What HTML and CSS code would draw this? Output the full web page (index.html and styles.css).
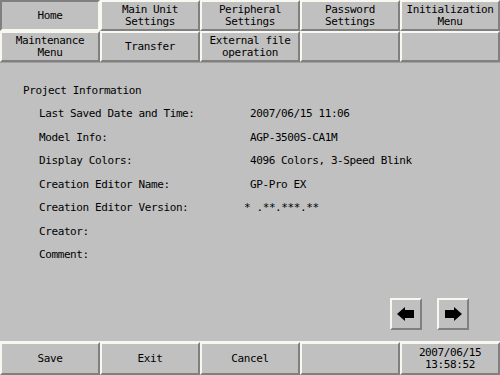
FILE: index.html
```html
<!DOCTYPE html>
<html lang="en">
<head>
    <meta charset="UTF-8">
    <title>Project Information</title>
    <link rel="stylesheet" href="styles.css">
</head>
<body>

    <div class="tabs">
        <div class="tab selected">Home</div>
        <div class="tab">Main Unit<br>Settings</div>
        <div class="tab">Peripheral<br>Settings</div>
        <div class="tab">Password<br>Settings</div>
        <div class="tab">Initialization<br>Menu</div>
        <div class="tab">Maintenance<br>Menu</div>
        <div class="tab">Transfer</div>
        <div class="tab">External file<br>operation</div>
        <div class="tab"></div>
        <div class="tab"></div>
    </div>

    <div class="content">
        <div class="title">Project Information</div>
        <div class="info">
            <div class="row"><span class="label">Last Saved Date and Time:</span><span class="value">2007/06/15 11:06</span></div>
            <div class="row"><span class="label">Model Info:</span><span class="value">AGP-3500S-CA1M</span></div>
            <div class="row"><span class="label">Display Colors:</span><span class="value">4096 Colors, 3-Speed Blink</span></div>
            <div class="row"><span class="label">Creation Editor Name:</span><span class="value">GP-Pro EX</span></div>
            <div class="row"><span class="label">Creation Editor Version:</span><span class="value version">* .**.***.**</span></div>
            <div class="row"><span class="label">Creator:</span><span class="value"></span></div>
            <div class="row"><span class="label">Comment:</span><span class="value"></span></div>
        </div>
        <div class="arrows">
            <button class="arrow">
                <svg width="18" height="14" viewBox="0 0 18 14"><path d="M0 7 L8 0 L8 3 L17 3 L17 11 L8 11 L8 14 Z" fill="#000"/></svg>
            </button>
            <button class="arrow">
                <svg width="18" height="14" viewBox="0 0 18 14"><path d="M18 7 L10 0 L10 3 L1 3 L1 11 L10 11 L10 14 Z" fill="#000"/></svg>
            </button>
        </div>
    </div>

    <div class="footer">
        <div class="tab">Save</div>
        <div class="tab">Exit</div>
        <div class="tab">Cancel</div>
        <div class="tab"></div>
        <div class="tab clock">2007/06/15<br>13:58:52</div>
    </div>

</body>
</html>
```

FILE: styles.css
```css
body {
    margin: 0;
    width: 500px;
    height: 375px;
    background-color: #c0c0c0;
    color: #000;
    font-family: "DejaVu Sans Mono", "Liberation Mono", monospace;
    font-size: 11px;
    letter-spacing: -0.4px;
    display: flex;
    flex-direction: column;
    overflow: hidden;
}
.tabs {
    display: grid;
    grid-template-columns: repeat(5, 100px);
    grid-template-rows: 31px 31px;
    border-bottom: 1px solid #a0a0a0;
}
.tab {
    box-sizing: border-box;
    display: flex;
    align-items: center;
    justify-content: center;
    text-align: center;
    line-height: 12px;
    border-top: 2px solid #f8f8f0;
    border-left: 2px solid #f8f8f0;
    border-right: 2px solid #808080;
    border-bottom: 2px solid #808080;
    background-color: #c0c0c0;
}
.tab.selected {
    border-top-color: #808080;
    border-left-color: #808080;
    border-right-color: #f8f8f0;
    border-bottom-color: #f8f8f0;
}
.content {
    flex: 1;
    padding: 21px 0 0 23px;
    display: flex;
    flex-direction: column;
}
.title {
    height: 23px;
    line-height: 14px;
}
.info {
    padding-left: 16px;
}
.row {
    display: flex;
    height: 23.5px;
    line-height: 14px;
}
.label {
    width: 211px;
}
.version {
    margin-left: -6px;
}
.arrows {
    display: flex;
    justify-content: flex-end;
    gap: 15px;
    padding-right: 31px;
    margin-top: 26px;
}
.arrow {
    width: 32px;
    height: 32px;
    padding: 0;
    display: flex;
    align-items: center;
    justify-content: center;
    background-color: #c0c0c0;
    border-top: 2px solid #f8f8f0;
    border-left: 2px solid #f8f8f0;
    border-right: 2px solid #808080;
    border-bottom: 2px solid #808080;
}
.footer {
    display: grid;
    grid-template-columns: repeat(5, 100px);
    height: 33px;
    border-top: 1px solid #f8f8f0;
}
.clock {
    line-height: 12px;
}
```
